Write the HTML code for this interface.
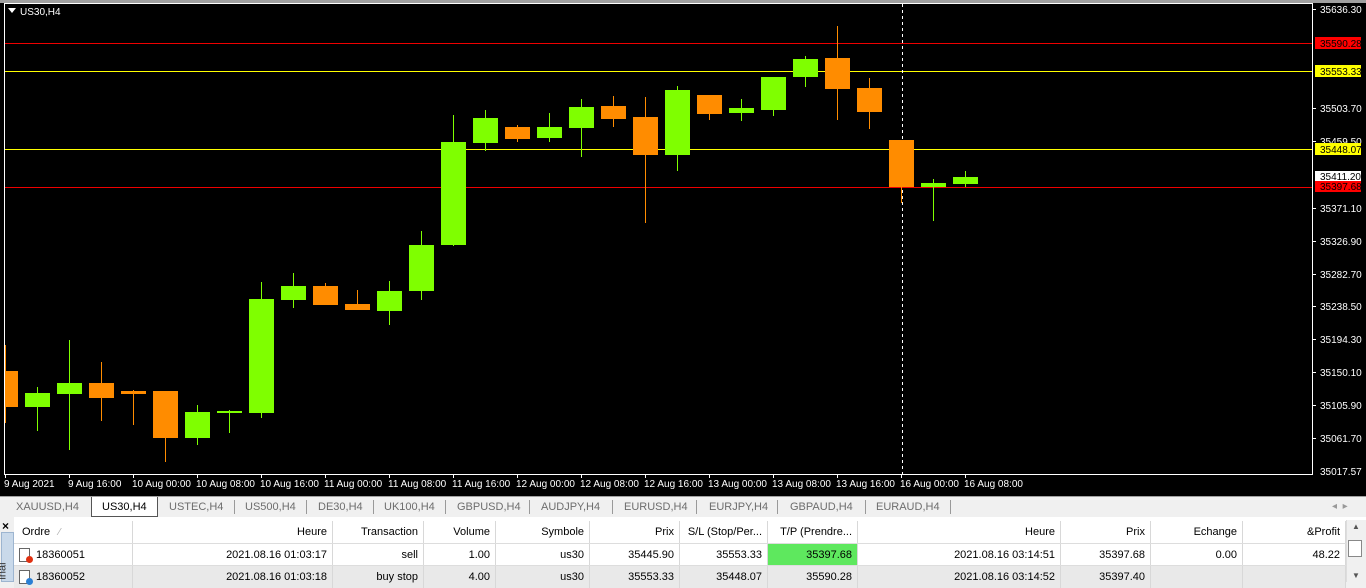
<!DOCTYPE html>
<html><head><meta charset="utf-8"><style>
*{margin:0;padding:0;box-sizing:border-box}
body{width:1366px;height:582px;overflow:hidden;background:#f0f0f0;font-family:"Liberation Sans",sans-serif;position:relative}
.abs{position:absolute}
svg text{font-family:"Liberation Sans",sans-serif}
.tabs{top:496px;left:0;width:1366px;height:21px;background:#f0f0f0;border-top:1px solid #a0a0a0;font-size:11px;color:#6d6d6d}
.tab{position:absolute;top:4px}
.sep{position:absolute;top:3px;width:1px;height:14px;background:#999}
.tbl{left:14px;top:521px;width:1332px;font-size:11px;color:#000}
.row{position:absolute;left:0;width:1332px;height:22px}
.c{position:absolute;top:0;height:100%;line-height:22px;padding:0 5px;text-align:right;border-right:1px solid #d8d8d8;white-space:nowrap;overflow:hidden}
</style></head><body>
<svg class="abs" style="left:0;top:0" width="1366" height="496">
<rect x="0" y="0" width="1366" height="496" fill="#000"/>
<rect x="0" y="0" width="1366" height="3" fill="#a0a0a0"/>
<line x1="4.5" y1="3" x2="4.5" y2="475" stroke="#fff"/>
<line x1="4" y1="3.5" x2="1312" y2="3.5" stroke="#fff"/>
<line x1="1312.5" y1="3" x2="1312.5" y2="475" stroke="#fff"/>
<line x1="4" y1="474.5" x2="1313" y2="474.5" stroke="#fff"/>
<line x1="5" y1="43.5" x2="1312" y2="43.5" stroke="#e00"/>
<line x1="5" y1="71.5" x2="1312" y2="71.5" stroke="#ff0"/>
<line x1="5" y1="149.5" x2="1312" y2="149.5" stroke="#ff0"/>
<line x1="5" y1="187.5" x2="1312" y2="187.5" stroke="#e00"/>
<line x1="902.5" y1="4" x2="902.5" y2="474" stroke="#fff" stroke-dasharray="3,3"/>
<g fill="#ff8c00" stroke="none">
<rect x="5" y="345" width="1" height="78"/><rect x="5" y="371" width="13" height="36"/>
<rect x="101" y="362" width="1" height="59"/><rect x="89" y="383" width="25" height="15"/>
<rect x="133" y="390" width="1" height="35"/><rect x="121" y="391" width="25" height="3"/>
<rect x="165" y="391" width="1" height="71"/><rect x="153" y="391" width="25" height="47"/>
<rect x="325" y="283" width="1" height="22"/><rect x="313" y="286" width="25" height="19"/>
<rect x="357" y="290" width="1" height="20"/><rect x="345" y="304" width="25" height="6"/>
<rect x="517" y="125" width="1" height="17"/><rect x="505" y="127" width="25" height="12"/>
<rect x="613" y="96" width="1" height="31"/><rect x="601" y="106" width="25" height="13"/>
<rect x="645" y="97" width="1" height="126"/><rect x="633" y="117" width="25" height="38"/>
<rect x="709" y="95" width="1" height="25"/><rect x="697" y="95" width="25" height="19"/>
<rect x="837" y="26" width="1" height="94"/><rect x="825" y="58" width="25" height="31"/>
<rect x="869" y="78" width="1" height="51"/><rect x="857" y="88" width="25" height="24"/>
<rect x="901" y="140" width="1" height="63"/><rect x="889" y="140" width="25" height="47"/>
</g>
<g fill="#7fff00">
<rect x="37" y="387" width="1" height="44"/><rect x="25" y="393" width="25" height="14"/>
<rect x="69" y="340" width="1" height="110"/><rect x="57" y="383" width="25" height="11"/>
<rect x="197" y="405" width="1" height="40"/><rect x="185" y="412" width="25" height="26"/>
<rect x="229" y="410" width="1" height="23"/><rect x="217" y="411" width="25" height="2"/>
<rect x="261" y="282" width="1" height="136"/><rect x="249" y="299" width="25" height="114"/>
<rect x="293" y="273" width="1" height="35"/><rect x="281" y="286" width="25" height="14"/>
<rect x="389" y="281" width="1" height="44"/><rect x="377" y="291" width="25" height="20"/>
<rect x="421" y="231" width="1" height="69"/><rect x="409" y="245" width="25" height="46"/>
<rect x="453" y="115" width="1" height="131"/><rect x="441" y="142" width="25" height="103"/>
<rect x="485" y="110" width="1" height="41"/><rect x="473" y="118" width="25" height="25"/>
<rect x="549" y="113" width="1" height="29"/><rect x="537" y="127" width="25" height="11"/>
<rect x="581" y="99" width="1" height="58"/><rect x="569" y="107" width="25" height="21"/>
<rect x="677" y="86" width="1" height="85"/><rect x="665" y="90" width="25" height="65"/>
<rect x="741" y="99" width="1" height="22"/><rect x="729" y="108" width="25" height="5"/>
<rect x="773" y="77" width="1" height="39"/><rect x="761" y="77" width="25" height="33"/>
<rect x="805" y="56" width="1" height="31"/><rect x="793" y="59" width="25" height="18"/>
<rect x="933" y="179" width="1" height="42"/><rect x="921" y="183" width="25" height="4"/>
<rect x="965" y="171" width="1" height="16"/><rect x="953" y="177" width="25" height="7"/>
</g>
<polygon points="8,8 16,8 12,13" fill="#fff"/>
<text x="20" y="15" fill="#fff" font-size="10">US30,H4</text>
<g fill="#fff" font-size="10">
<text x="1320" y="13">35636.30</text>
<text x="1320" y="112">35503.70</text>
<text x="1320" y="145">35459.50</text>
<text x="1320" y="212">35371.10</text>
<text x="1320" y="245">35326.90</text>
<text x="1320" y="278">35282.70</text>
<text x="1320" y="310">35238.50</text>
<text x="1320" y="343">35194.30</text>
<text x="1320" y="376">35150.10</text>
<text x="1320" y="409">35105.90</text>
<text x="1320" y="442">35061.70</text>
<text x="1320" y="475">35017.57</text>
</g>
<g stroke="#fff"><line x1="1313" y1="9.5" x2="1316" y2="9.5"/><line x1="1313" y1="108.5" x2="1316" y2="108.5"/><line x1="1313" y1="141.5" x2="1316" y2="141.5"/><line x1="1313" y1="208.5" x2="1316" y2="208.5"/><line x1="1313" y1="241.5" x2="1316" y2="241.5"/><line x1="1313" y1="274.5" x2="1316" y2="274.5"/><line x1="1313" y1="306.5" x2="1316" y2="306.5"/><line x1="1313" y1="339.5" x2="1316" y2="339.5"/><line x1="1313" y1="372.5" x2="1316" y2="372.5"/><line x1="1313" y1="405.5" x2="1316" y2="405.5"/><line x1="1313" y1="438.5" x2="1316" y2="438.5"/></g>
<rect x="1315" y="37" width="46" height="12" fill="#f00"/><text x="1320" y="47" font-size="10" fill="#000">35590.28</text>
<rect x="1315" y="65" width="46" height="12" fill="#ff0"/><text x="1320" y="75" font-size="10" fill="#000">35553.33</text>
<rect x="1315" y="143" width="46" height="12" fill="#ff0"/><text x="1320" y="153" font-size="10" fill="#000">35448.07</text>
<rect x="1315" y="171" width="46" height="11" fill="#fff"/><text x="1320" y="180" font-size="10" fill="#000">35411.20</text>
<rect x="1315" y="181" width="46" height="11" fill="#f00"/><text x="1320" y="190" font-size="10" fill="#000">35397.68</text>
<g fill="#fff" font-size="10">
<text x="4" y="487">9 Aug 2021</text><text x="68" y="487">9 Aug 16:00</text><text x="132" y="487">10 Aug 00:00</text><text x="196" y="487">10 Aug 08:00</text><text x="260" y="487">10 Aug 16:00</text><text x="324" y="487">11 Aug 00:00</text><text x="388" y="487">11 Aug 08:00</text><text x="452" y="487">11 Aug 16:00</text><text x="516" y="487">12 Aug 00:00</text><text x="580" y="487">12 Aug 08:00</text><text x="644" y="487">12 Aug 16:00</text><text x="708" y="487">13 Aug 00:00</text><text x="772" y="487">13 Aug 08:00</text><text x="836" y="487">13 Aug 16:00</text><text x="900" y="487">16 Aug 00:00</text><text x="964" y="487">16 Aug 08:00</text>
</g>
<g stroke="#fff"><line x1="5.5" y1="475" x2="5.5" y2="478"/><line x1="69.5" y1="475" x2="69.5" y2="478"/><line x1="133.5" y1="475" x2="133.5" y2="478"/><line x1="197.5" y1="475" x2="197.5" y2="478"/><line x1="261.5" y1="475" x2="261.5" y2="478"/><line x1="325.5" y1="475" x2="325.5" y2="478"/><line x1="389.5" y1="475" x2="389.5" y2="478"/><line x1="453.5" y1="475" x2="453.5" y2="478"/><line x1="517.5" y1="475" x2="517.5" y2="478"/><line x1="581.5" y1="475" x2="581.5" y2="478"/><line x1="645.5" y1="475" x2="645.5" y2="478"/><line x1="709.5" y1="475" x2="709.5" y2="478"/><line x1="773.5" y1="475" x2="773.5" y2="478"/><line x1="837.5" y1="475" x2="837.5" y2="478"/><line x1="901.5" y1="475" x2="901.5" y2="478"/><line x1="965.5" y1="475" x2="965.5" y2="478"/></g>
</svg>
<div class="abs tabs">
<div class="abs" style="left:91px;top:0;width:67px;height:20px;background:#fff;border:1px solid #555;border-top:none"></div>
<span class="tab" style="left:16px">XAUUSD,H4</span>
<span class="tab" style="left:102px;color:#000">US30,H4</span>
<span class="tab" style="left:169px">USTEC,H4</span><div class="sep" style="left:234px"></div>
<span class="tab" style="left:245px">US500,H4</span><div class="sep" style="left:306px"></div>
<span class="tab" style="left:318px">DE30,H4</span><div class="sep" style="left:373px"></div>
<span class="tab" style="left:384px">UK100,H4</span><div class="sep" style="left:445px"></div>
<span class="tab" style="left:457px">GBPUSD,H4</span><div class="sep" style="left:529px"></div>
<span class="tab" style="left:541px">AUDJPY,H4</span><div class="sep" style="left:612px"></div>
<span class="tab" style="left:624px">EURUSD,H4</span><div class="sep" style="left:696px"></div>
<span class="tab" style="left:709px">EURJPY,H4</span><div class="sep" style="left:777px"></div>
<span class="tab" style="left:790px">GBPAUD,H4</span><div class="sep" style="left:865px"></div>
<span class="tab" style="left:876px">EURAUD,H4</span><div class="sep" style="left:950px"></div>
<span class="tab" style="left:1332px;font-size:10px;color:#999">◂ &nbsp;▸</span>
</div>
<div class="abs" style="left:0;top:517px;width:1366px;height:65px;background:#fff"></div>
<div class="abs" style="left:0;top:517px;width:14px;height:65px;background:#f0f0f0"></div>
<div class="abs" style="left:2px;top:519px;font-size:12px;font-weight:bold">×</div>
<div class="abs" style="left:1px;top:532px;width:13px;height:50px;background:#c9d9ea;border:1px solid #9db5d0"></div>
<div class="abs" style="left:-6px;top:565px;font-size:11px;transform:rotate(-90deg);color:#333">inal</div>
<div class="abs tbl">
<div class="row" style="top:0;height:23px;background:#fff;border-bottom:1px solid #ddd">
<div class="c" style="left:0;width:119px;text-align:left;padding-left:8px">Ordre <span style="color:#aaa;font-size:10px">&nbsp;&nbsp;⁄</span></div>
<div class="c" style="left:119px;width:200px">Heure</div>
<div class="c" style="left:319px;width:91px">Transaction</div>
<div class="c" style="left:410px;width:72px">Volume</div>
<div class="c" style="left:482px;width:94px">Symbole</div>
<div class="c" style="left:576px;width:90px">Prix</div>
<div class="c" style="left:666px;width:88px">S/L (Stop/Per...</div>
<div class="c" style="left:754px;width:90px">T/P (Prendre...</div>
<div class="c" style="left:844px;width:203px">Heure</div>
<div class="c" style="left:1047px;width:90px">Prix</div>
<div class="c" style="left:1137px;width:92px">Echange</div>
<div class="c" style="left:1229px;width:103px">&amp;Profit</div>
</div>
<div class="row" style="top:23px;background:#fff;border-bottom:1px solid #ddd">
<div class="c" style="left:0;width:119px;text-align:left;padding-left:22px">18360051</div>
<div class="abs" style="left:5px;top:4px;width:11px;height:14px;border:1px solid #666;background:#fff"></div><div class="abs" style="left:12px;top:12px;width:7px;height:7px;border-radius:50%;background:#e03010"></div>
<div class="c" style="left:119px;width:200px">2021.08.16 01:03:17</div>
<div class="c" style="left:319px;width:91px">sell</div>
<div class="c" style="left:410px;width:72px">1.00</div>
<div class="c" style="left:482px;width:94px">us30</div>
<div class="c" style="left:576px;width:90px">35445.90</div>
<div class="c" style="left:666px;width:88px">35553.33</div>
<div class="c" style="left:754px;width:90px;background:#5ee85e">35397.68</div>
<div class="c" style="left:844px;width:203px">2021.08.16 03:14:51</div>
<div class="c" style="left:1047px;width:90px">35397.68</div>
<div class="c" style="left:1137px;width:92px">0.00</div>
<div class="c" style="left:1229px;width:103px">48.22</div>
</div>
<div class="row" style="top:45px;background:#e9e9e9">
<div class="c" style="left:0;width:119px;text-align:left;padding-left:22px">18360052</div>
<div class="abs" style="left:5px;top:4px;width:11px;height:14px;border:1px solid #666;background:#fff"></div><div class="abs" style="left:12px;top:12px;width:7px;height:7px;border-radius:50%;background:#2a7fd4"></div>
<div class="c" style="left:119px;width:200px">2021.08.16 01:03:18</div>
<div class="c" style="left:319px;width:91px">buy stop</div>
<div class="c" style="left:410px;width:72px">4.00</div>
<div class="c" style="left:482px;width:94px">us30</div>
<div class="c" style="left:576px;width:90px">35553.33</div>
<div class="c" style="left:666px;width:88px">35448.07</div>
<div class="c" style="left:754px;width:90px">35590.28</div>
<div class="c" style="left:844px;width:203px">2021.08.16 03:14:52</div>
<div class="c" style="left:1047px;width:90px">35397.40</div>
<div class="c" style="left:1137px;width:92px"></div>
<div class="c" style="left:1229px;width:103px"></div>
</div>
</div>
<div class="abs" style="left:1346px;top:520px;width:20px;height:62px;background:#f0f0f0;border-left:1px solid #ddd"></div>
<div class="abs" style="left:1352px;top:522px;font-size:8px;color:#555">▲</div>
<div class="abs" style="left:1348px;top:540px;width:14px;height:17px;background:#fff;border:1px solid #888"></div>
<div class="abs" style="left:1352px;top:571px;font-size:8px;color:#555">▼</div>
</body></html>
